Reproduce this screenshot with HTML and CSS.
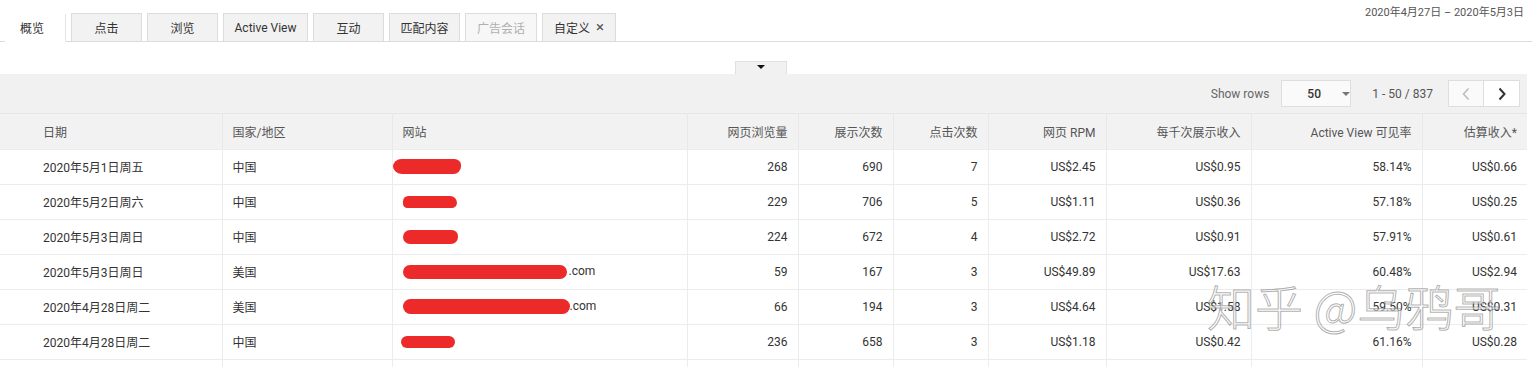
FILE: index.html
```html
<!DOCTYPE html>
<html lang="zh-CN">
<head>
<meta charset="utf-8">
<title>报告</title>
<link rel="stylesheet" href="styles.css">
</head>
<body>
<div class="page">
  <div class="topbar">
    <div class="tabs">
      <div class="tab active">概览</div>
      <div class="tab">点击</div>
      <div class="tab">浏览</div>
      <div class="tab wide">Active View</div>
      <div class="tab">互动</div>
      <div class="tab">匹配内容</div>
      <div class="tab disabled">广告会话</div>
      <div class="tab custom">自定义 <span class="close">×</span></div>
    </div>
    <div class="daterange">2020年4月27日 – 2020年5月3日</div>
  </div>

  <div class="expander-row"><div class="expander"><span class="caret-down"></span></div></div>

  <div class="toolbar">
    <span class="label">Show rows</span>
    <div class="select"><span class="val">50</span><span class="caret-small"></span></div>
    <span class="range">1 - 50 / 837</span>
    <div class="pager">
      <div class="pbtn"><svg width="10" height="14" viewBox="0 0 10 14"><path d="M7.5 1.5 L2.5 7 L7.5 12.5" fill="none" stroke="#bdbdbd" stroke-width="1.6"/></svg></div>
      <div class="pbtn"><svg width="10" height="14" viewBox="0 0 10 14"><path d="M2.5 1.5 L7.5 7 L2.5 12.5" fill="none" stroke="#333" stroke-width="2"/></svg></div>
    </div>
  </div>

  <table class="grid">
    <colgroup>
      <col class="c-date"><col class="c-country"><col class="c-site">
      <col class="c-pv"><col class="c-imp"><col class="c-clk"><col class="c-rpm">
      <col class="c-erpm"><col class="c-av"><col class="c-rev">
    </colgroup>
    <thead>
      <tr>
        <th class="first">日期</th><th>国家/地区</th><th>网站</th>
        <th class="num">网页浏览量</th><th class="num">展示次数</th><th class="num">点击次数</th>
        <th class="num">网页 RPM</th><th class="num">每千次展示收入</th><th class="num">Active View 可见率</th><th class="num">估算收入*</th>
      </tr>
    </thead>
    <tbody>
      <tr>
        <td class="first">2020年5月1日周五</td><td>中国</td><td><span class="scrib s1"></span></td>
        <td class="num">268</td><td class="num">690</td><td class="num">7</td><td class="num">US$2.45</td><td class="num">US$0.95</td><td class="num">58.14%</td><td class="num">US$0.66</td>
      </tr>
      <tr>
        <td class="first">2020年5月2日周六</td><td>中国</td><td><span class="scrib s2"></span></td>
        <td class="num">229</td><td class="num">706</td><td class="num">5</td><td class="num">US$1.11</td><td class="num">US$0.36</td><td class="num">57.18%</td><td class="num">US$0.25</td>
      </tr>
      <tr>
        <td class="first">2020年5月3日周日</td><td>中国</td><td><span class="scrib s3"></span></td>
        <td class="num">224</td><td class="num">672</td><td class="num">4</td><td class="num">US$2.72</td><td class="num">US$0.91</td><td class="num">57.91%</td><td class="num">US$0.61</td>
      </tr>
      <tr>
        <td class="first">2020年5月3日周日</td><td>美国</td><td><span class="scrib s4"></span>.com</td>
        <td class="num">59</td><td class="num">167</td><td class="num">3</td><td class="num">US$49.89</td><td class="num">US$17.63</td><td class="num">60.48%</td><td class="num">US$2.94</td>
      </tr>
      <tr>
        <td class="first">2020年4月28日周二</td><td>美国</td><td><span class="scrib s5"></span>.com</td>
        <td class="num">66</td><td class="num">194</td><td class="num">3</td><td class="num">US$4.64</td><td class="num">US$1.58</td><td class="num">59.50%</td><td class="num">US$0.31</td>
      </tr>
      <tr>
        <td class="first">2020年4月28日周二</td><td>中国</td><td><span class="scrib s6"></span></td>
        <td class="num">236</td><td class="num">658</td><td class="num">3</td><td class="num">US$1.18</td><td class="num">US$0.42</td><td class="num">61.16%</td><td class="num">US$0.28</td>
      </tr>
      <tr>
        <td class="first"></td><td></td><td></td><td></td><td></td><td></td><td></td><td></td><td></td><td></td>
      </tr>
    </tbody>
  </table>

  <div class="watermark">知乎 @乌鸦哥</div>
</div>
</body>
</html>
```
FILE: styles.css
```css
* { box-sizing: border-box; }
html, body { margin: 0; padding: 0; background: #fff; }
body {
  font-family: Roboto, "Noto Sans CJK SC", sans-serif;
  font-size: 12px;
  color: #333;
  width: 1532px;
  height: 367px;
  overflow: hidden;
}
.page { position: relative; width: 1532px; }

.topbar {
  display: flex;
  justify-content: space-between;
  height: 42px;
  border-bottom: 1px solid #dcdcdc;
}
.tabs {
  display: flex;
  align-items: flex-end;
  gap: 5px;
  padding-left: 5px;
  margin-bottom: -1px;
}
.tab {
  width: 71px;
  height: 29px;
  display: flex;
  align-items: center;
  justify-content: center;
  background: #f2f2f2;
  border: 1px solid #dcdcdc;
  color: #333;
  font-size: 12px;
}
.tab.active {
  width: 61px;
  background: #fff;
  border-color: #fff;
  border-right-color: #e4e4e4;
  border-bottom-color: #fff;
  justify-content: flex-start;
  padding-left: 14px;
}
.tab.wide { width: 85px; }
.tab.disabled { color: #b0b0b0; background: #f7f7f7; width: 72px; }
.tab.custom { width: 74px; gap: 4px; }
.tab .close { font-size: 15px; color: #555; line-height: 1; margin-left: 2px; }

.daterange {
  font-size: 11px;
  color: #555;
  padding-top: 3px;
  padding-right: 8px;
}

.expander-row {
  height: 32px;
  display: flex;
  align-items: flex-end;
  padding-left: 735px;
}
.expander {
  width: 52px;
  height: 13px;
  background: #f1f1f1;
  border: 1px solid #e0e0e0;
  border-bottom: none;
  display: flex;
  justify-content: center;
  padding-top: 3px;
}
.caret-down {
  width: 0; height: 0;
  border-left: 4px solid transparent;
  border-right: 4px solid transparent;
  border-top: 4px solid #111;
}

.toolbar {
  width: 1527px;
  height: 40px;
  background: #f1f1f1;
  border-bottom: 1px solid #e6e6e6;
  display: flex;
  align-items: center;
  justify-content: flex-end;
  padding-right: 7px;
}
.toolbar .label { color: #666; margin-right: 12px; }
.select {
  width: 70px;
  height: 27px;
  background: #fafafa;
  border: 1px solid #dedede;
  display: flex;
  align-items: center;
  padding-left: 25px;
  margin-right: 21px;
}
.select .val { font-weight: 500; color: #333; }
.caret-small {
  margin-left: 21px;
  width: 0; height: 0;
  border-left: 4px solid transparent;
  border-right: 4px solid transparent;
  border-top: 4px solid #777;
}
.range { color: #555; margin-right: 15px; }
.pager { display: flex; }
.pbtn {
  width: 36px;
  height: 27px;
  background: #fafafa;
  border: 1px solid #dedede;
  display: flex;
  align-items: center;
  justify-content: center;
}
.pbtn + .pbtn { border-left: none; background: #fff; }

.grid {
  width: 1527px;
  border-collapse: collapse;
  table-layout: fixed;
}
.c-date { width: 222px; }
.c-country { width: 170px; }
.c-site { width: 295px; }
.c-pv { width: 111px; }
.c-imp { width: 95px; }
.c-clk { width: 95px; }
.c-rpm { width: 118px; }
.c-erpm { width: 145px; }
.c-av { width: 171px; }
.c-rev { width: 105px; }

.grid th, .grid td {
  height: 35px;
  padding: 0 10px 0 10px;
  text-align: left;
  white-space: nowrap;
  border-right: 1px solid #ececec;
  border-bottom: 1px solid #ececec;
  font-weight: normal;
  color: #333;
  overflow: hidden;
}
.grid th {
  background: #f2f2f2;
  color: #555;
  border-right-color: #e8e8e8;
}
.grid th:last-child, .grid td:last-child { border-right: none; }
.grid .first { padding-left: 43px; }
.grid .num { text-align: right; }

.scrib {
  display: inline-block;
  vertical-align: middle;
  background: #ec2a2a;
}
.s1 { width: 68px; height: 15px; border-radius: 9px 7px 8px 10px / 8px 6px 8px 8px; margin-left: -10px; }
.s2 { width: 54px; height: 12px; border-radius: 6px 8px 6px 5px; }
.s3 { width: 55px; height: 14px; border-radius: 8px 7px 8px 8px; }
.s4 { width: 164px; height: 14px; border-radius: 7px; margin-right: 2px; }
.s5 { width: 167px; height: 15px; border-radius: 8px; }
.s6 { width: 54px; height: 12px; border-radius: 6px; margin-left: -2px; }

.watermark {
  position: absolute;
  left: 1207px;
  top: 274px;
  font-size: 48px;
  line-height: 62px;
  font-family: "Noto Sans CJK SC", sans-serif;
  font-weight: 300;
  color: rgba(255,255,255,0.55);
  -webkit-text-stroke: 1px rgba(110,110,110,0.55);
  pointer-events: none;
  white-space: nowrap;
}
```
